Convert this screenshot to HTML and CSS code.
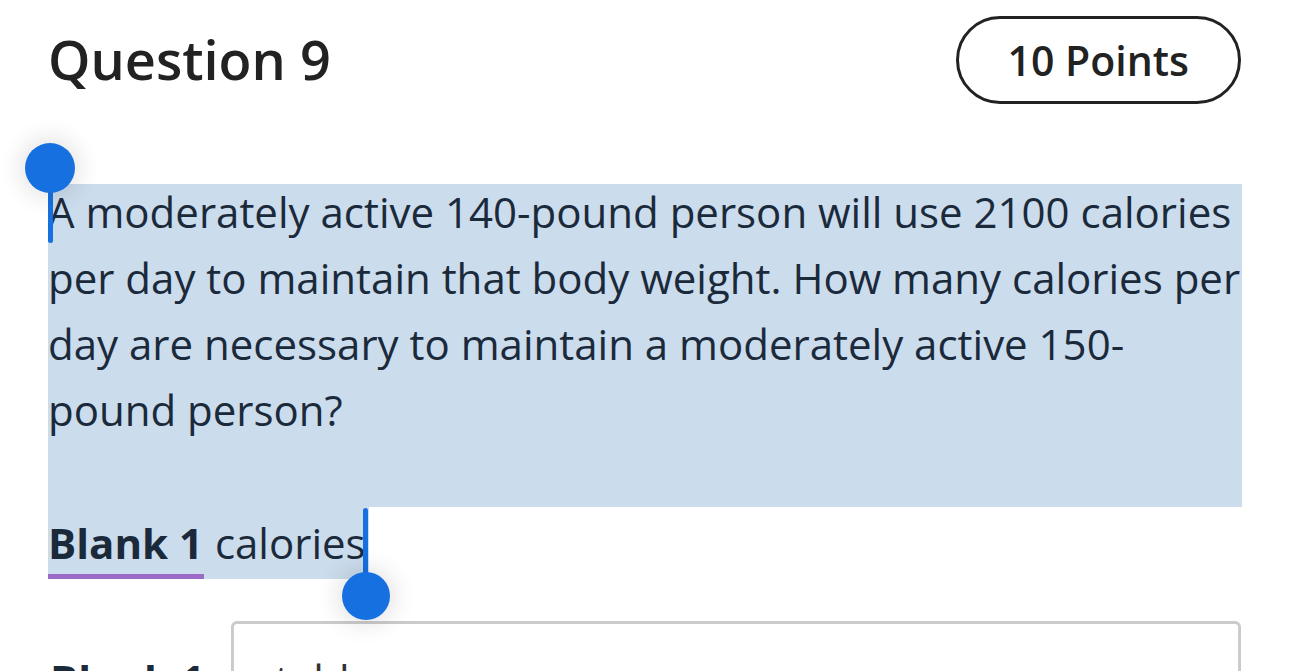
FILE: index.html
```html
<!DOCTYPE html>
<html lang="en">
<head>
<meta charset="utf-8">
<title>Question 9</title>
<link rel="stylesheet" href="styles.css">
</head>
<body>
<div class="page">
  <header class="header">
    <h1 class="title">Question 9</h1>
    <div class="points">10 Points</div>
  </header>

  <div class="question">
    <p class="question-text">A moderately active 140-pound person will use 2100 calories per day to maintain that body weight. How many calories per day are necessary to maintain a moderately active 150-pound person?</p>
  </div>

  <div class="blank-row">
    <div class="blank-line"><span class="blank-label">Blank 1</span><span class="blank-unit">&nbsp;calories</span></div>
  </div>

  <div class="answer-row">
    <div class="answer-label">Blank 1</div>
    <div class="answer-input">stable</div>
  </div>

  <div class="handle handle-start"><span class="stem"></span><span class="knob"></span></div>
  <div class="handle handle-end"><span class="stem"></span><span class="knob"></span></div>
</div>
</body>
</html>
```

FILE: styles.css
```css
* { box-sizing: border-box; }

html, body {
  margin: 0;
  background: #ffffff;
  overflow: hidden;
}

body {
  font-family: "Open Sans", "Noto Sans", sans-serif;
  color: #1b2a3b;
}

.page {
  position: relative;
  height: 671px;
  padding: 0 48px;
  overflow: hidden;
}

.header {
  display: flex;
  justify-content: space-between;
  align-items: center;
  padding-top: 16px;
}

.title {
  margin: 0;
  font-size: 54px;
  font-weight: 600;
  color: #222222;
  line-height: 1.36;
}

.points {
  height: 88px;
  padding: 0 49px;
  border: 3px solid #222222;
  border-radius: 44px;
  display: flex;
  align-items: center;
  font-size: 41px;
  font-weight: 600;
  color: #222222;
  margin-right: 1px;
}

.question {
  display: flow-root;
  margin-top: 80px;
  background: #cbdcec;
  padding-bottom: 64px;
}

.question-text {
  margin: -5px -2px 0 0;
  font-size: 42px;
  line-height: 66px;
  color: #1b2a3b;
}

.blank-row {
  display: flex;
}

.blank-line {
  display: flex;
  background: #cbdcec;
  font-size: 42px;
  line-height: 72px;
  height: 72px;
  padding-right: 3px;
}

.blank-label {
  font-weight: 700;
  padding-right: 1px;
  box-shadow: inset 0 -5px 0 #9a6ac6;
}

.blank-unit {
  font-weight: 400;
}

.answer-row {
  display: flex;
  margin-top: 42px;
  margin-right: 1px;
}

.answer-label {
  width: 183px;
  padding: 30px 0 0 2px;
  font-size: 42px;
  font-weight: 700;
  line-height: 57px;
  color: #1b2a3b;
}

.answer-input {
  flex: 1;
  height: 100px;
  border: 3px solid #cbcbcb;
  border-radius: 6px;
  padding: 27px 0 0 21px;
  font-size: 42px;
  line-height: 57px;
  color: #333333;
}

.handle {
  position: absolute;
}

.handle .stem {
  position: absolute;
  width: 5px;
  background: #1670e0;
  border-radius: 3px;
}

.handle .knob {
  position: absolute;
  border-radius: 50%;
  background: #1670e0;
  box-shadow: 0 0 22px 6px rgba(0, 0, 0, 0.10);
}

.handle-start {
  left: 25px;
  top: 143px;
}

.handle-start .knob {
  left: 0;
  top: 0;
  width: 50px;
  height: 50px;
}

.handle-start .stem {
  left: 23px;
  top: 25px;
  height: 75px;
}

.handle-end {
  left: 342px;
  top: 508px;
}

.handle-end .stem {
  left: 21px;
  top: 0;
  height: 88px;
}

.handle-end .knob {
  left: 0;
  top: 64px;
  width: 48px;
  height: 48px;
}
```
